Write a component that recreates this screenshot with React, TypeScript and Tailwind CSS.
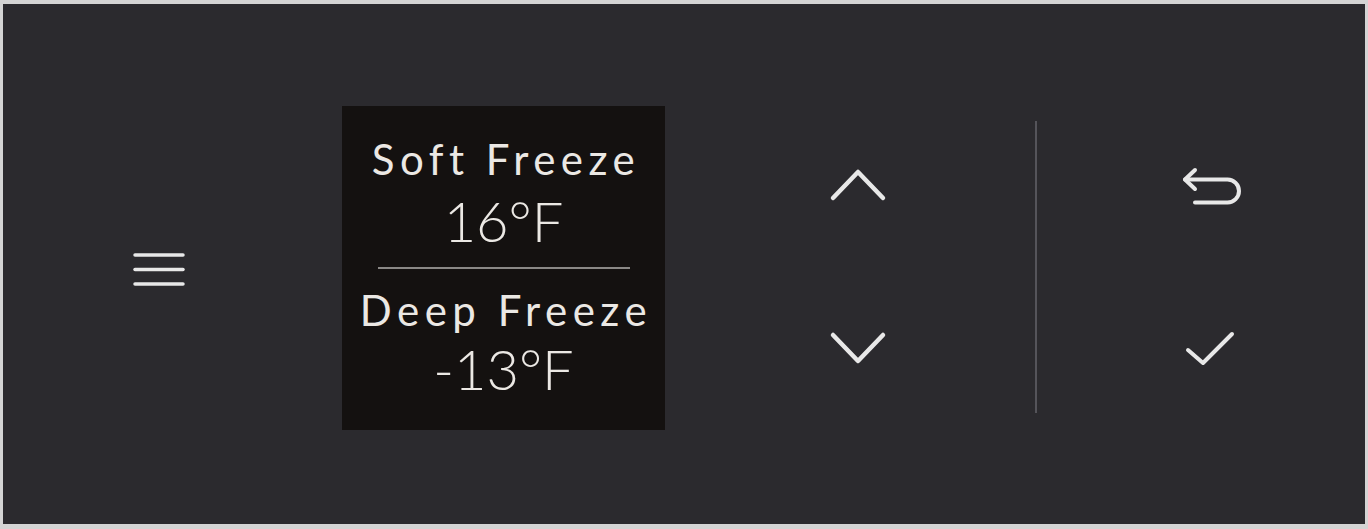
import React from "react";

export default function App() {
  return (
    <div className="w-[1368px] h-[529px] bg-[#d4d4d4] pt-[4px] pl-[3px] pr-[3px] pb-[5px]">
      <div className="flex items-start w-full h-full bg-[#2b2a2e]">
        {/* Menu */}
        <div className="ml-[128px] mt-[248px]">
          <svg width="54" height="36" viewBox="0 0 54 36" fill="none" stroke="#e8e8e8" strokeWidth="3.5" strokeLinecap="round">
            <line x1="4" y1="3" x2="52" y2="3" />
            <line x1="4" y1="17.5" x2="52" y2="17.5" />
            <line x1="4" y1="32" x2="52" y2="32" />
          </svg>
        </div>

        {/* Display */}
        <div
          className="ml-[157px] mt-[102px] w-[323px] h-[324px] bg-[#141110] flex flex-col items-center text-[#ebe8e4]"
          style={{ fontFamily: "Lato, 'Open Sans', sans-serif" }}
        >
          <div className="mt-[32px] pl-[5px] text-[42px] leading-none tracking-[5.5px] font-normal">Soft Freeze</div>
          <div className="mt-[13px] text-[56px] leading-none font-light">16°F</div>
          <div className="mt-[18px] w-[252px] h-[2px] bg-[#8a8886]" />
          <div className="mt-[20px] pl-[5px] text-[42px] leading-none tracking-[5.5px] font-normal">Deep Freeze</div>
          <div className="mt-[10px] text-[56px] leading-none font-light">-13°F</div>
        </div>

        {/* Up / Down */}
        <div className="ml-[163px] mt-[161px]">
          <svg width="60" height="200" viewBox="0 0 60 200" fill="none" stroke="#e8e8e8" strokeWidth="4.5" strokeLinecap="round" strokeLinejoin="round">
            <path d="M5 33 L30 7 L55 33" />
            <path d="M5 170 L30 196 L55 170" />
          </svg>
        </div>

        {/* Divider */}
        <div className="ml-[147px] mt-[117px] w-[2px] h-[292px] bg-[#55545a]" />

        {/* Back / Confirm */}
        <div className="ml-[143px] mt-[156px]">
          <svg width="66" height="210" viewBox="0 0 66 210" fill="none" stroke="#e8e8e8" strokeWidth="4" strokeLinecap="round" strokeLinejoin="round">
            <path d="M15 10 L5 19.5 L15 29" />
            <path d="M5 19.5 H47.5 A11.5 11.5 0 0 1 47.5 42.5 H15" />
            <path d="M8 190 L23 203 L52 174" />
          </svg>
        </div>
      </div>
    </div>
  );
}
